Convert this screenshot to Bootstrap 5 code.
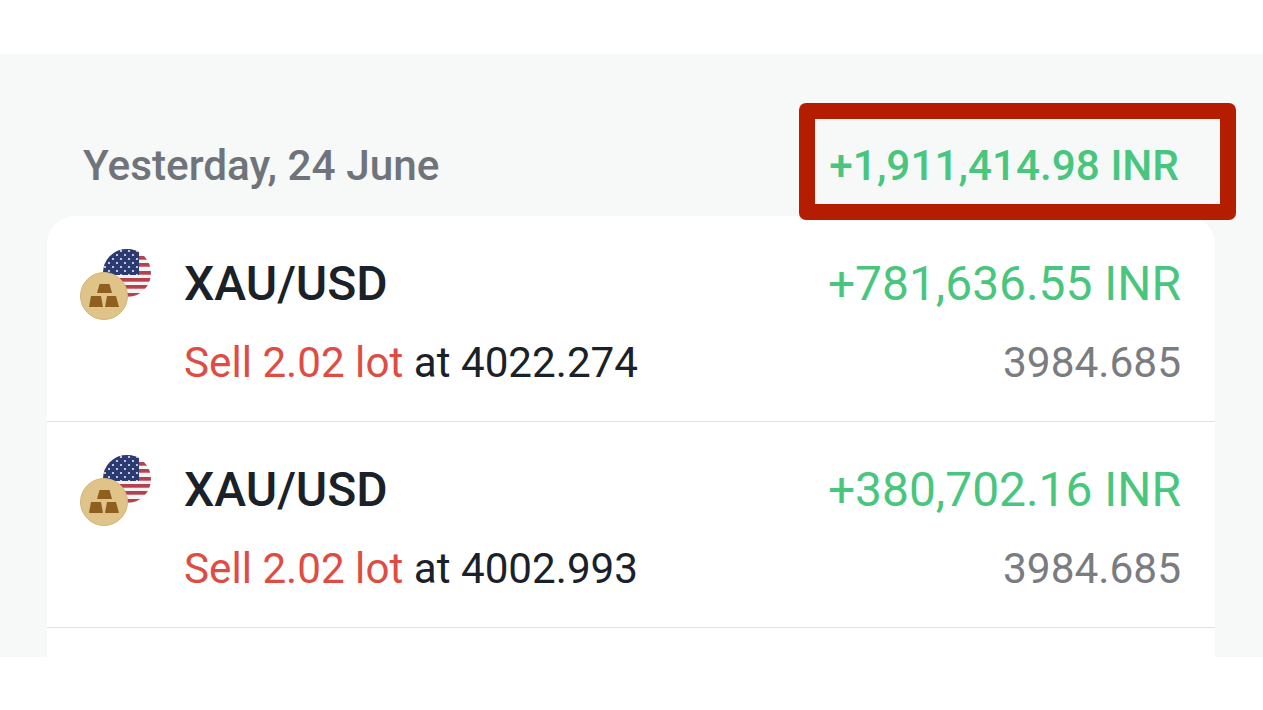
<!DOCTYPE html>
<html lang="en">
<head>
    <meta charset="UTF-8">
    <meta name="viewport" content="width=device-width, initial-scale=1.0">
    <title>Closed positions</title>
    <link href="https://cdn.jsdelivr.net/npm/bootstrap@5.3.2/dist/css/bootstrap.min.css" rel="stylesheet">
    <style>
        body { background: #fff; font-family: Roboto, "Liberation Sans", sans-serif; height: 710px; overflow: hidden; }
        .panel { margin-top: 54px; height: 603px; background: #f7f8f8; overflow: hidden; }
        .day-head { height: 162px; padding: 0 84px 0 83px; }
        .day-title { font-size: 42.3px; font-weight: 500; line-height: 45px; color: #6f747a; margin-top: 89px; }
        .day-total { position: relative; font-size: 42.3px; font-weight: 500; line-height: 45px; color: #49c67e; margin-top: 89px; }
        .red-frame { position: absolute; left: -30px; right: -57px; top: -40px; bottom: -32px; border: 16px solid #b51d00; border-radius: 7px; }
        .trades { margin: 0 48px 0 47px; height: 500px; background: #fff; border-radius: 28px 28px 0 0; }
        .trade { height: 206px; border-bottom: 1px solid #dfe1e2; padding: 0 34px 0 33px; }
        .trade-icon { width: 72px; height: 74px; margin-top: 33px; flex: none; }
        .trade-body { margin-left: 33px; margin-top: 44px; }
        .trade-line { height: 48px; line-height: 48px; }
        .trade-line + .trade-line { margin-top: 31px; }
        .symbol { font-size: 48px; font-weight: 500; color: #1a2129; margin-left: -1px; }
        .profit { font-size: 47.9px; color: #49c67e; }
        .detail { font-size: 42.2px; color: #1a2129; margin-left: -1px; }
        .sell { color: #de4c44; }
        .close-price { font-size: 42.4px; color: #7a7c7f; }
    </style>
</head>
<body>

<svg width="0" height="0" class="d-block">
    <defs>
        <clipPath id="flagClip"><circle cx="47" cy="24" r="24"/></clipPath>
        <pattern id="flagStars" x="23" y="0" width="8" height="8" patternUnits="userSpaceOnUse">
            <circle cx="2" cy="2" r="1.1" fill="#e6e9f2"/>
            <circle cx="6" cy="6" r="1.1" fill="#e6e9f2"/>
        </pattern>
        <symbol id="pairIcon" viewBox="0 0 72 74">
            <g clip-path="url(#flagClip)">
                <rect x="23" y="0" width="48" height="48" fill="#f4f2f2"/>
                <rect x="23" y="0" width="48" height="3" fill="#b5414f"/>
                <rect x="23" y="7" width="48" height="3.7" fill="#b5414f"/>
                <rect x="23" y="14" width="48" height="3.7" fill="#b5414f"/>
                <rect x="23" y="22" width="48" height="3.7" fill="#b5414f"/>
                <rect x="23" y="29" width="48" height="3.7" fill="#b5414f"/>
                <rect x="23" y="36" width="48" height="3.7" fill="#b5414f"/>
                <rect x="23" y="44" width="48" height="3.7" fill="#b5414f"/>
                <rect x="23" y="0" width="36" height="26" fill="#2b3a70"/>
                <rect x="23" y="0" width="36" height="26" fill="url(#flagStars)"/>
            </g>
            <circle cx="24" cy="47" r="23.5" fill="#dfc389" stroke="#d3b67c" stroke-width="1"/>
            <path d="M19.5 35h10l2.500 9H17zM11 47h10l2 11H9zM27 47h9l3 11H25z" fill="#8f5f1f"/>
        </symbol>
    </defs>
</svg>

<div class="panel">
    <div class="day-head d-flex justify-content-between align-items-start">
        <div class="day-title">Yesterday, 24 June</div>
        <div class="day-total">+1,911,414.98 INR<span class="red-frame"></span></div>
    </div>

    <div class="trades">
        <div class="trade d-flex">
            <svg class="trade-icon"><use href="#pairIcon"/></svg>
            <div class="trade-body flex-grow-1">
                <div class="trade-line d-flex justify-content-between">
                    <span class="symbol">XAU/USD</span>
                    <span class="profit">+781,636.55 INR</span>
                </div>
                <div class="trade-line d-flex justify-content-between">
                    <span class="detail"><span class="sell">Sell 2.02 lot</span> at 4022.274</span>
                    <span class="close-price">3984.685</span>
                </div>
            </div>
        </div>
        <div class="trade d-flex">
            <svg class="trade-icon"><use href="#pairIcon"/></svg>
            <div class="trade-body flex-grow-1">
                <div class="trade-line d-flex justify-content-between">
                    <span class="symbol">XAU/USD</span>
                    <span class="profit">+380,702.16 INR</span>
                </div>
                <div class="trade-line d-flex justify-content-between">
                    <span class="detail"><span class="sell">Sell 2.02 lot</span> at 4002.993</span>
                    <span class="close-price">3984.685</span>
                </div>
            </div>
        </div>
    </div>
</div>

<script src="https://cdn.jsdelivr.net/npm/bootstrap@5.3.2/dist/js/bootstrap.bundle.min.js"></script>
</body>
</html>
